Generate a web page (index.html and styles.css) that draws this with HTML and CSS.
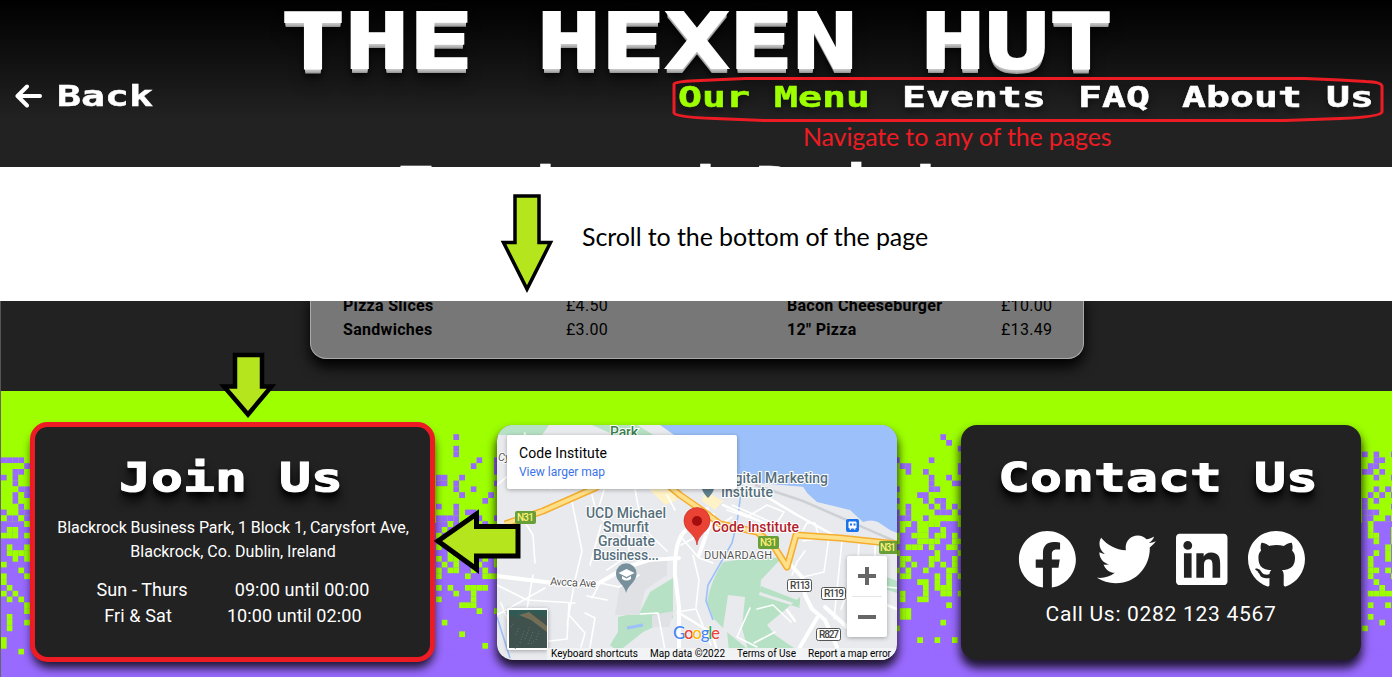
FILE: index.html
```html
<!DOCTYPE html>
<html lang="en">
<head>
<meta charset="utf-8">
<title>The Hexen Hut</title>
<link rel="stylesheet" href="styles.css">
</head>
<body>
<header class="top">
  <h1 class="brand"><span class="px">THE HEXEN HUT</span></h1>
  <div class="bar">
    <a class="back"><svg class="back-arrow" viewBox="0 0 28 24"><path d="M12 2.500L2.500 12L12 21.500M3 12H25" fill="none" stroke="#fff" stroke-width="4" stroke-linecap="round" stroke-linejoin="round"/></svg><span class="px">Back</span></a>
    <nav class="nav">
      <a class="c8 active"><span class="px">Our Menu</span></a>
      <a class="c6"><span class="px">Events</span></a>
      <a class="c3"><span class="px">FAQ</span></a>
      <a class="c8"><span class="px">About Us</span></a>
    </nav>
  </div>
  <p class="hint">Navigate to any of the pages</p>
  <h2 class="peek"><span class="px">Food and Drinks</span></h2>
</header>
<section class="gap"><p>Scroll to the bottom of the page</p></section>
<section class="menu">
  <div class="panel">
    <b>Pizza Slices</b><span>£4.50</span><b>Bacon Cheeseburger</b><span>£10.00</span>
    <b>Sandwiches</b><span>£3.00</span><b>12" Pizza</b><span>£13.49</span>
  </div>
</section>
<footer class="foot">
  <svg class="dither" id="dither" viewBox="0 0 1391 286"></svg>
  <div class="card join">
    <h2 class="w7"><span class="px">Join Us</span></h2>
    <p class="addr">Blackrock Business Park, 1 Block 1, Carysfort Ave,<br><span class="a2">Blackrock, Co. Dublin, Ireland</span></p>
    <div class="hours"><p class="week"><span>Sun - Thurs</span><span>09:00 until 00:00</span></p><p class="weekend"><span>Fri &amp; Sat</span><span>10:00 until 02:00</span></p></div>
  </div>
  <div class="card map">
    <svg width="400" height="235" viewBox="0 0 400 235">
      <rect width="400" height="235" fill="#e8eaed"/>
      <path d="M0 0H52L45 10L0 10ZM95 0L122 12H160L140 0Z" fill="#b7e1c4"/>
      <path d="M163 0L180 12L256 58L306 62L310 68L320 77L353 85L366 97Q374 94 381 97L393 105L400 108V0Z" fill="#9cc0f9"/>
      <path d="M240 56L306 62L310 68L300 72L250 62Z" fill="#e8eaed"/>
      <path d="M150 62H176L180 75L168 80ZM208 66L226 76L218 85L205 76Z" fill="#fff2c7"/>
      <path d="M285 133L262 132L226 137Q214 155 210 177L216 193L226 203L231 170L248 172L245 203L251 225L262 227L300 225L278 210L270 200L303 172L303 180L263 167L264 155Q278 140 285 133ZM264 161L300 175L303 183L262 170ZM176 153L153 167L143 187L121 192V207L113 220L121 227L146 207L176 193ZM385 150L400 156V168L385 163ZM230 207L253 226H232Z" fill="#b7e1c4"/>
      <path d="M155 190L177 186L172 202L155 202ZM126 143L170 131V150L148 165L142 190L118 190Z" fill="#dfe1e5"/>
      <g fill="none" stroke="#9cc0f9" stroke-width="1.600"><path d="M245 60L240 98L235 118L211 160L209 176L216 195M0 192L13 233"/><path d="M130 203L146 200" stroke-width="3"/></g>
      <g fill="none" stroke="#fff" stroke-linecap="round" stroke-linejoin="round">
        <path stroke-width="1.600" d="M0 60L20 43L28 8M22 88L36 110L38 138M74 72L85 126L78 155L70 200M36 150L26 206M0 160L30 175L78 178M0 190L48 163M95 70L100 90L136 120M107 65L101 85M104 100L93 140M138 64L145 102L170 126M95 173L103 158L122 162L142 150M72 190L88 208L84 222M88 188L98 193L93 222M54 64L48 30M220 93L208 107L184 120M196 130L202 155L199 182M235 92L216 105M235 80L290 104M230 85L250 92L270 80L287 87L276 104M306 116L332 112L327 147L306 152M345 116L337 194M306 105L310 98H318L321 109M362 118L358 190M330 167L350 169L344 184M260 184L276 180L294 197M253 183L240 212L260 222M257 218L278 207M350 155L370 160L400 163M378 117V140M308 126L300 137L295 150M170 70L178 85M150 90L132 105L132 130L110 145M4 178L20 218M168 225L161 188L143 189M180 187L199 184L214 220M72 178L70 214L44 217M90 171L110 175M184 112L202 133L216 138"/>
        <path stroke-width="4" d="M0 151L72 160L102 158L130 142L152 135L182 133M210 84L186 108Q177 120 178 150L182 182L182 235M216 90L202 130M290 136L305 152L308 170L315 184L328 195L340 222M320 193L303 222L300 235M328 182L350 202"/>
        <path stroke-width="2.500" d="M182 188L215 208L222 232M260 66L300 90L340 112M290 185L298 196M226 80L253 92L285 105M390 180L400 184"/>
      </g>
      <path d="M258 60L306 76L400 117" fill="none" stroke="#cdd0d5" stroke-width="2.500"/>
      <g fill="none" stroke-linejoin="round"><path d="M8 99L46 86L98 63L120 50M165 55L183 70L206 86L223 99L260 107L276 120L290 142L299 110L343 113L400 119" stroke="#f5ad2e" stroke-width="7"/><path d="M8 99L46 86L98 63L120 50M165 55L183 70L206 86L223 99L260 107L276 120L290 142L299 110L343 113L400 119" stroke="#ffe08a" stroke-width="4"/></g>
      <g class="mt road"><rect x="18" y="86" width="21" height="13" rx="2" fill="#689f38"/><rect x="261" y="111" width="21" height="13" rx="2" fill="#689f38"/><rect x="382" y="116" width="21" height="13" rx="2" fill="#689f38"/><g fill="#fff176"><text x="20" y="96" textLength="17">N31</text><text x="263" y="121" textLength="17">N31</text><text x="383" y="126" textLength="16">N31</text></g>
      <g fill="#fff" stroke="#555"><rect x="290.500" y="154.500" width="24" height="12" rx="2"/><rect x="324.500" y="162.500" width="24" height="12" rx="2"/><rect x="319.500" y="203.500" width="24" height="12" rx="2"/></g>
      <g fill="#444"><text x="293" y="164" textLength="20">R113</text><text x="327" y="172" textLength="20">R119</text><text x="322" y="213" textLength="20">R827</text></g></g>
      <g class="mt place">
        <text x="113" y="12" fill="#3c8052" textLength="28">Park</text>
        <text x="89" y="93" textLength="80">UCD Michael</text><text x="106" y="107" textLength="46">Smurfit</text><text x="101" y="121" textLength="57">Graduate</text><text x="96" y="135" textLength="66">Business...</text>
        <text x="225" y="58" textLength="106">Digital Marketing</text><text x="224" y="72" textLength="52">Institute</text>
        <text x="215" y="107" fill="#b3202a" textLength="87">Code Institute</text>
      </g>
      <g class="mt street"><text x="207" y="134" textLength="68">DUNARDAGH</text><text x="53" y="160" transform="rotate(3 53 160)" textLength="46">Avoca Ave</text><text x="1" y="36" font-style="italic">Cy</text></g>
      <path d="M205 64H217Q216 68 211 73Q206 68 205 64Z" fill="#5f7f8c"/>
      <path d="M129 168C128 160 119 157 119 148.500A10 10 0 0 1 139.500 148.500C139.500 157 131 160 129 168Z" fill="#78909c"/><path d="M121.500 148L129.500 144L137.500 148L129.500 152ZM125 151V154Q129.500 157 134 154V151L129.500 153.500Z" fill="#fff"/>
      <path d="M200 120C199 108 187 107 187 95.500A13 13 0 0 1 213 95.500C213 107 201 108 200 120Z" fill="#ea4335" stroke="#c5221f" stroke-width=".6"/><circle cx="200" cy="96" r="5" fill="#a50e0e"/>
      <rect x="349" y="94" width="13" height="13" rx="2" fill="#1a73e8"/><path d="M352 97h7v6h-7zM353 105l1-2m4 2l-1-2" fill="#fff" stroke="#fff"/><path d="M353 98.500h2v2h-2zM356.500 98.500h2v2h-2z" fill="#1a73e8"/>
      <g class="soft"><rect x="10" y="10" width="230" height="54" rx="2" fill="#fff"/><rect x="350" y="131" width="40" height="81" rx="2" fill="#fff"/></g>
      <text class="mt" x="22" y="33" font-size="14" fill="#000" textLength="88">Code Institute</text><text class="mt" x="22" y="51" font-size="12" fill="#3b72e8" textLength="86">View larger map</text>
      <path d="M361 151H379M370 142V160M361 192H379" stroke="#666" stroke-width="4"/><path d="M355 171.500H385" stroke="#e6e6e6"/>
      <g class="soft"><rect x="10" y="183" width="41" height="42" rx="2" fill="#fff"/></g><rect x="12" y="185" width="38" height="38" fill="#3f524e"/><path d="M12 185H50V193L35 188L22 193L12 190Z" fill="#315a55"/><path d="M22 190L32 187L50 201V207L34 195Z" fill="#746e57"/><path d="M14 202l4-5m1 13l3-8m1 16l4-12m1 8l5-13m-2 18l5-12m3 8l3-9m-24 18l3-5m13 0l4-4" stroke="#6b7770" stroke-dasharray="1 2"/>
      <rect x="50" y="223" width="350" height="12" fill="#f3f4f5" opacity=".9"/>
      <g class="mt legal"><text x="54" y="232" textLength="87">Keyboard shortcuts</text><text x="153" y="232" textLength="75">Map data ©2022</text><text x="240" y="232" textLength="59">Terms of Use</text><text x="311" y="232" textLength="83">Report a map error</text></g>
      <text class="google" x="176" y="214" textLength="47"><tspan fill="#4285f4">G</tspan><tspan fill="#ea4335">o</tspan><tspan fill="#fbbc04">o</tspan><tspan fill="#4285f4">g</tspan><tspan fill="#34a853">l</tspan><tspan fill="#ea4335">e</tspan></text>
    </svg>
  </div>
  <div class="card contact">
    <h2 class="w10"><span class="px">Contact Us</span></h2>
    <div class="icons">
      <svg class="i512" viewBox="0 0 512 512"><path d="M504 256C504 119 393 8 256 8S8 119 8 256c0 123.780 90.690 226.380 209.250 245V327.690h-63V256h63v-54.640c0-62.150 37-96.480 93.670-96.480 27.140 0 55.520 4.840 55.520 4.840v61h-31.280c-30.800 0-40.410 19.120-40.410 38.730V256h68.780l-11 71.690h-57.780V501C413.310 482.380 504 379.780 504 256z"/></svg>
      <svg class="i512" viewBox="0 0 512 512"><path d="M459.370 151.716c.325 4.548.325 9.097.325 13.645 0 138.720-105.583 298.558-298.558 298.558-59.452 0-114.680-17.219-161.137-47.106 8.447.974 16.568 1.299 25.340 1.299 49.055 0 94.213-16.568 130.274-44.832-46.132-.975-84.792-31.188-98.112-72.772 6.498.974 12.995 1.624 19.818 1.624 9.421 0 18.843-1.300 27.614-3.573-48.081-9.747-84.143-51.980-84.143-102.985v-1.299c13.969 7.797 30.214 12.670 47.431 13.319-28.264-18.843-46.781-51.005-46.781-87.391 0-19.492 5.197-37.360 14.294-52.954 51.655 63.675 129.300 105.258 216.365 109.807-1.624-7.797-2.599-15.918-2.599-24.040 0-57.828 46.782-104.934 104.934-104.934 30.213 0 57.502 12.670 76.670 33.137 23.715-4.548 46.456-13.320 66.599-25.340-7.798 24.366-24.366 44.833-46.132 57.827 21.117-2.273 41.584-8.122 60.426-16.243-14.292 20.791-32.161 39.308-52.628 54.253z"/></svg>
      <svg class="i448" viewBox="0 0 448 512"><path d="M416 32H31.900C14.300 32 0 46.500 0 64.300v383.400C0 465.500 14.300 480 31.900 480H416c17.600 0 32-14.500 32-32.300V64.300c0-17.800-14.400-32.300-32-32.300zM135.400 416H69V202.200h66.500V416zm-33.200-243c-21.300 0-38.500-17.300-38.500-38.500S80.900 96 102.200 96c21.200 0 38.500 17.300 38.500 38.500 0 21.300-17.200 38.500-38.500 38.500zm282.100 243h-66.400V312c0-24.800-.5-56.700-34.500-56.700-34.600 0-39.900 27-39.900 54.900V416h-66.400V202.200h63.700v29.200h.9c8.900-16.800 30.600-34.500 62.900-34.500 67.200 0 79.700 44.300 79.700 101.900V416z"/></svg>
      <svg class="i496" viewBox="0 0 496 512"><path d="M244.800 8C106.100 8 0 113.300 0 252c0 110.900 69.800 205.800 169.500 239.200 12.800 2.300 17.300-5.600 17.300-12.100 0-6.200-.3-40.400-.3-61.400 0 0-70 15-84.700-29.800 0 0-11.400-29.100-27.800-36.600 0 0-22.900-15.700 1.600-15.400 0 0 24.900 2 38.600 25.800 21.900 38.600 58.600 27.500 72.900 20.900 2.300-16 8.800-27.100 16-33.700-55.900-6.200-112.300-14.300-112.300-110.500 0-27.500 7.600-41.300 23.600-58.900-2.600-6.500-11.100-33.300 2.600-67.900 20.900-6.500 69 27 69 27 20-5.600 41.500-8.500 62.800-8.500s42.800 2.900 62.800 8.500c0 0 48.100-33.600 69-27 13.700 34.700 5.200 61.400 2.600 67.900 16 17.700 25.800 31.500 25.800 58.900 0 96.500-58.900 104.200-114.800 110.500 9.200 7.900 17 22.900 17 46.400 0 33.700-.3 75.400-.3 83.600 0 6.500 4.600 14.400 17.300 12.100C428.200 457.800 496 362.900 496 252 496 113.300 383.500 8 244.800 8z"/><path d="M64 342L78 350L92 371L106 386L128 393L168 393" fill="none" stroke="#222" stroke-width="7" stroke-dasharray="12 5"/></svg>
    </div>
    <p class="call">Call Us: 0282 123 4567</p>
  </div>
</footer>
<svg class="marks" width="1392" height="681" viewBox="0 0 1392 681">
  <g fill="none" stroke="#ed1c24">
    <path stroke-width="3" d="M674 84Q674 82 690 81L745 78.500H1305L1340 80L1366 81.500Q1381 82 1382 86V112Q1380 117 1340 118.500L1285 120.500H765L715 118.500Q674 117 674 113Z"/>
    <rect stroke-width="5" x="32.500" y="424.500" width="400" height="235" rx="15"/>
  </g>
  <g fill="#b5e61d" stroke="#000" stroke-linejoin="miter">
    <path stroke-width="3.500" d="M515 196H539V242.500H550.500L527 289L503.500 242.500H515Z"/>
    <path stroke-width="4.500" d="M235 355H262V386.500H271.500L248 414.500L224 386.500H235Z"/>
    <path stroke-width="5" d="M518 526.500V556H476.500V569L438 541L476.500 514V526.500Z"/>
  </g>
</svg>
<script src="dither.js"></script>
</body>
</html>
```

FILE: styles.css
```css
* { box-sizing: border-box; margin: 0; padding: 0; }
body { width: 1392px; height: 681px; overflow: hidden; background: #fff; color: #fff; font-family: Roboto, "Open Sans", sans-serif; position: relative; }
.px { display: inline-block; font-family: "DejaVu Sans Mono", monospace; font-weight: bold; white-space: pre; transform: scaleX(1.384); transform-origin: left; -webkit-text-stroke: .5px currentColor; }
.top { height: 167px; overflow: hidden; background: linear-gradient(#000, #222 120px); }
.brand { height: 77px; width: 832px; margin-left: 281px; font-size: 76.800px; line-height: 83px; text-shadow: 0 1px 0 #ccc, 0 2px 0 #c4c4c4, 0 3px 0 #bbb, 0 4px 0 #aaa, 0 5px 0 #999, 0 7px 6px rgba(0,0,0,.7), 0 12px 14px rgba(0,0,0,.4); }
.brand .px { -webkit-text-stroke-width: 2px; }
.bar { height: 40px; display: flex; justify-content: space-between; padding: 0 18px 0 15px; font-size: 28.800px; line-height: 38px; }
.back { display: flex; align-items: center; gap: 14px; width: 140px; height: 37px; }
.back-arrow { width: 28px; height: 24px; }
.nav { display: flex; gap: 32px; line-height: 40px; text-shadow: 0 4px 6px rgba(0,0,0,.5); }
.c8 { width: 192px; }
.c6 { width: 144px; }
.c3 { width: 72px; }
.active { color: #9dff00; }
.hint { color: #ed1c24; font: 25px/34px Lato, sans-serif; margin-left: 803px; padding-top: 2px; letter-spacing: -.13px; }
.peek { margin: 3px 0 0 395px; font-size: 48px; line-height: 56px; height: 56px; }
.gap { height: 134px; display: flex; align-items: center; padding: 4px 0 0 582px; color: #000; font: 25px/34px Lato, sans-serif; letter-spacing: -.09px; }
.menu { height: 90px; background: #222; padding-left: 309px; overflow: hidden; border-left: 1px solid #555; }
.panel { width: 774px; height: 65px; transform: translateY(-7px); background: #777; border: 1px solid #aaa; border-top: 0; border-radius: 0 0 16px 16px; box-shadow: 0 8px 14px #000; color: #000; padding: 0 32px; display: grid; grid-template-columns: 223px 221px 214px 1fr; grid-template-rows: 24px 24px; font-size: 16px; line-height: 24px; align-content: start; letter-spacing: .3px; }
.foot { height: 286px; position: relative; display: flex; gap: 64px; padding: 34px 0 0 32px; border-left: 1px solid #666; background: linear-gradient(#9dff00 0 132px, #996aff 132px); overflow: hidden; }
.dither { position: absolute; left: 0; top: 0; width: 1391px; height: 286px; }
.card { width: 400px; height: 235px; border-radius: 16px; background: #222; position: relative; box-shadow: 0 7px 10px 1px rgba(0,0,0,.8); flex: none; text-align: center; }
.map { overflow: hidden; }
.map svg { display: block; }
.card h2 { margin: 29px auto 0; height: 48px; font-size: 38.400px; line-height: 47px; text-align: left; text-shadow: 0 1px #ddd, 0 5px 4px rgba(0,0,0,.8), 0 9px 9px #000; }
.card h2 .px { -webkit-text-stroke-width: 1px; }
.card .w7 { width: 229px; }
.card .w10 { width: 326px; }
.addr { margin-top: 14px; font-size: 16px; line-height: 24px; letter-spacing: -.05px; }
.a2 { letter-spacing: 0; }
.hours { margin-top: 13px; font-size: 18px; line-height: 26px; letter-spacing: .1px; white-space: nowrap; }
.hours p { display: flex; justify-content: center; }
.week { gap: 47px; }
.weekend { gap: 55px; }
.icons { display: flex; justify-content: center; gap: 20px; margin-top: 28px; padding-left: 1px; }
.icons svg { height: 58.800px; fill: #fff; display: block; }
.i512 { width: 58.800px; }
.i448 { width: 51.500px; }
.i496 { width: 57px; }
.call { font-size: 21px; line-height: 28px; margin-top: 11px; letter-spacing: .7px; }
.mt { font-family: Roboto, sans-serif; }
.road { font-size: 10px; font-weight: 500; }
.place { font-size: 14px; font-weight: 500; fill: #566f7c; paint-order: stroke; stroke: #fff; stroke-width: 2px; }
.street { font-size: 11px; fill: #555; paint-order: stroke; stroke: #fff; stroke-width: 2px; }
.legal { font-size: 10px; fill: #000; }
.google { font: 500 17px Lato, sans-serif; paint-order: stroke; stroke: #fff; stroke-width: 1px; }
.soft { filter: drop-shadow(0 1px 2px rgba(0,0,0,.3)); }
.marks { position: absolute; left: 0; top: 0; }
```

FILE: dither.js
```js
// Blocks of the green-to-purple dither; "#" is purple, "." is green, one row per string.
const S = 5.8, TOP = 43.2;
const strips = [
  { x: 0, rows: [".....",".....",".....",".....","####.","....#","..##.","#.#..","..#..","...##","..#.#","..#..","...#.","#..##",".##.#","####.","#..##","...#.","#####","#.##.","#....","##.#.",".####","###.#",".###.",".####","#.###",".#.##","#.#.#","####.","####.","#.###","#.##.","#.###","#####",".####",".####","###.#","#####"] },
  { x: 435, rows: ["...#.......","...........","...#.......","...#.......",".......#..#","......#...#","..........#","##..#......","##.#......#","...#..#....","....#....#.","........#..","#..#.......","...#.##....","####..##..#","##.#....#..","#.#.#.#.#.#",".##..#.###.","#.##.##..##",".#.#..##.#.","##.##.#.#.#",".#..#.##.#.","#.#.###.##.",".#..##.#.##",".####.##...","###########",".#.##....##","###.##.####",".#####.####","####...####","#######.##.","###########","#.#########","###########","####.######","###########","########.##","###########","###########"] },
  { x: 893, rows: ["........#...",".........#..","...........#","............","#.....#.....",".##........#","..#..#.....#","......#..#..","......#...##","#.....##....","....##......","#....#.##...","..#...#.#.#.","#.#....###.#","###..#......","#..#....###.","#.##..##.###",".##...#..#.#",".###....##..","##...#.##..#",".######.###.","#..###..##.#","#.#.##.#.#.#",".#.##.###..#","#..####.#.#.","####..#.#.##","#####.#...##","#.###.##..#.","#.##..######","#########.##","#..#########","#..#########","########.###",".###########","############","####.##.##.#","############","############","############"] },
  { x: 1361, rows: ["......","......","......","#.#..#","..##..",".##...","##.#..","..#..#","......","..#.#.",".#.#.#","#.#...","#....#","###...","##..#.","#.####","#.###.","#..##.","##.##.","####.#","##.#.#","#.##.#","#.####","#..#.#","#.###.","##.###","###.##","#.....","######","#.##.#","######","#.####","###.##",".#####","######","######","######","######","######"] }
];
let out = "";
for (const { x, rows } of strips)
  rows.forEach((row, r) => [...row].forEach((c, i) => {
    out += `<rect x="${x + i * S}" y="${TOP + r * S}" width="5.85" height="5.85" fill="${c === "#" ? "#996aff" : "#9dff00"}"/>`;
  }));
document.getElementById("dither").innerHTML = out;
```
